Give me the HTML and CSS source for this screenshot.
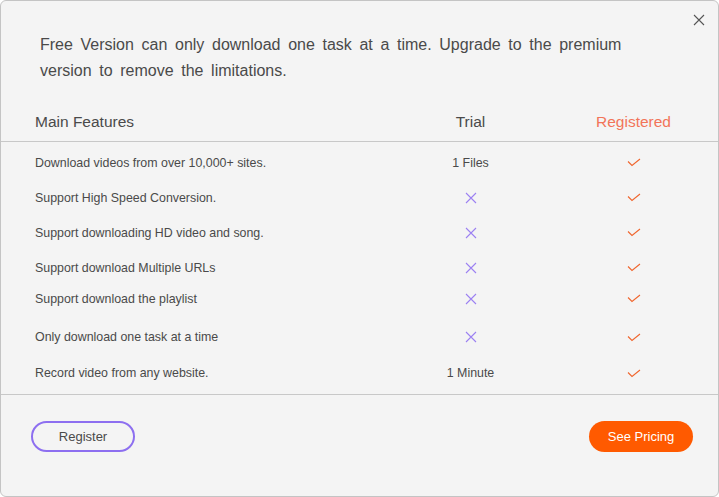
FILE: index.html
```html
<!DOCTYPE html>
<html lang="en">
<head>
    <meta charset="UTF-8">
    <meta name="viewport" content="width=device-width, initial-scale=1.0">
    <title>Upgrade</title>
    <link rel="stylesheet" href="styles.css">
</head>
<body>
    <div class="dialog">
        <button class="close" aria-label="Close">
            <svg width="12" height="12" viewBox="0 0 12 12"><path d="M1 1L11 11M11 1L1 11" stroke="#555" stroke-width="1.1" fill="none"/></svg>
        </button>

        <p class="intro">Free Version can only download one task at a time. Upgrade to the premium version to remove the limitations.</p>

        <div class="table">
            <div class="row head">
                <span>Main Features</span>
                <span class="cell">Trial</span>
                <span class="cell reg">Registered</span>
            </div>
            <div class="body">
                <div class="row">
                    <span>Download videos from over 10,000+ sites.</span>
                    <span class="cell">1 Files</span>
                    <span class="cell"><svg class="check" width="14" height="9" viewBox="0 0 14 9"><path d="M1 3.5L5 7.5L13 1" stroke="#f0652d" stroke-width="1.1" fill="none"/></svg></span>
                </div>
                <div class="row">
                    <span>Support High Speed Conversion.</span>
                    <span class="cell"><svg width="12" height="12" viewBox="0 0 12 12"><path d="M1 1L11 11M11 1L1 11" stroke="#9c80f2" stroke-width="1.1" fill="none"/></svg></span>
                    <span class="cell"><svg class="check" width="14" height="9" viewBox="0 0 14 9"><path d="M1 3.5L5 7.5L13 1" stroke="#f0652d" stroke-width="1.1" fill="none"/></svg></span>
                </div>
                <div class="row">
                    <span>Support downloading HD video and song.</span>
                    <span class="cell"><svg width="12" height="12" viewBox="0 0 12 12"><path d="M1 1L11 11M11 1L1 11" stroke="#9c80f2" stroke-width="1.1" fill="none"/></svg></span>
                    <span class="cell"><svg class="check" width="14" height="9" viewBox="0 0 14 9"><path d="M1 3.5L5 7.5L13 1" stroke="#f0652d" stroke-width="1.1" fill="none"/></svg></span>
                </div>
                <div class="row">
                    <span>Support download Multiple URLs</span>
                    <span class="cell"><svg width="12" height="12" viewBox="0 0 12 12"><path d="M1 1L11 11M11 1L1 11" stroke="#9c80f2" stroke-width="1.1" fill="none"/></svg></span>
                    <span class="cell"><svg class="check" width="14" height="9" viewBox="0 0 14 9"><path d="M1 3.5L5 7.5L13 1" stroke="#f0652d" stroke-width="1.1" fill="none"/></svg></span>
                </div>
                <div class="row short">
                    <span>Support download the playlist</span>
                    <span class="cell"><svg width="12" height="12" viewBox="0 0 12 12"><path d="M1 1L11 11M11 1L1 11" stroke="#9c80f2" stroke-width="1.1" fill="none"/></svg></span>
                    <span class="cell"><svg class="check" width="14" height="9" viewBox="0 0 14 9"><path d="M1 3.5L5 7.5L13 1" stroke="#f0652d" stroke-width="1.1" fill="none"/></svg></span>
                </div>
                <div class="row tall">
                    <span>Only download one task at a time</span>
                    <span class="cell"><svg width="12" height="12" viewBox="0 0 12 12"><path d="M1 1L11 11M11 1L1 11" stroke="#9c80f2" stroke-width="1.1" fill="none"/></svg></span>
                    <span class="cell"><svg class="check" width="14" height="9" viewBox="0 0 14 9"><path d="M1 3.5L5 7.5L13 1" stroke="#f0652d" stroke-width="1.1" fill="none"/></svg></span>
                </div>
                <div class="row last">
                    <span>Record video from any website.</span>
                    <span class="cell">1 Minute</span>
                    <span class="cell"><svg class="check" width="14" height="9" viewBox="0 0 14 9"><path d="M1 3.5L5 7.5L13 1" stroke="#f0652d" stroke-width="1.1" fill="none"/></svg></span>
                </div>
            </div>
        </div>

        <div class="footer">
            <button class="btn outline">Register</button>
            <button class="btn primary">See Pricing</button>
        </div>
    </div>
</body>
</html>
```

FILE: styles.css
```css
html, body {
    margin: 0;
    padding: 0;
}
body {
    font-family: "Liberation Sans", Arial, sans-serif;
    color: #4a4a4a;
    background: #ffffff;
}
.dialog {
    position: relative;
    box-sizing: border-box;
    width: 719px;
    height: 497px;
    background: #f4f4f4;
    border: 1px solid #c4c4c4;
    border-radius: 6px;
    display: flex;
    flex-direction: column;
}
.close {
    position: absolute;
    top: 13px;
    right: 13px;
    width: 12px;
    height: 12px;
    padding: 0;
    border: none;
    background: none;
    cursor: pointer;
    display: flex;
}
.intro {
    margin: 31px 60px 0 39px;
    font-size: 16px;
    line-height: 26px;
    word-spacing: 3.2px;
}
.table {
    margin-top: 18px;
}
.row {
    box-sizing: border-box;
    display: grid;
    grid-template-columns: 1fr 163px 163px;
    align-items: center;
    height: 35px;
    padding: 0 3px 0 34px;
    font-size: 12.4px;
}
.row.short {
    height: 27px;
}
.row.tall {
    height: 50px;
}
.row.last {
    height: 22px;
}
.row.head {
    height: 40px;
    padding-top: 1px;
    font-size: 15.5px;
    border-bottom: 1px solid #c8c8c8;
}
.cell {
    display: flex;
    justify-content: center;
    align-items: center;
}
.reg {
    color: #f27459;
}
.body {
    padding: 3px 0 10px;
    border-bottom: 1px solid #c8c8c8;
}
.footer {
    display: flex;
    justify-content: space-between;
    padding: 26px 25px 0 30px;
}
.btn {
    box-sizing: border-box;
    width: 104px;
    height: 31px;
    border-radius: 16px;
    font-family: inherit;
    font-size: 13px;
    cursor: pointer;
}
.outline {
    background: transparent;
    border: 2px solid #8d6ff0;
    color: #4a4a4a;
}
.primary {
    background: #ff5a00;
    border: none;
    color: #ffffff;
}
```
